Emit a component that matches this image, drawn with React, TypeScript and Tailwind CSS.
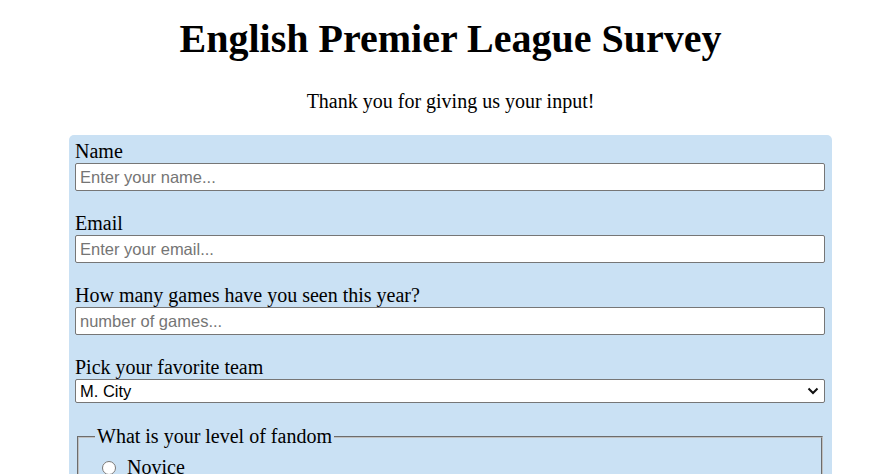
export default function App() {
  return (
    <div className="min-h-screen bg-white pl-6 text-black font-['Liberation_Serif','Times_New_Roman',serif]">
      {/* Heading */}
      <h1 className="pt-[16px] text-center text-[40px] font-bold leading-[46px]">
        English Premier League Survey
      </h1>
      <p className="mt-[28px] text-center text-[20px] leading-[23px]">
        Thank you for giving us your input!
      </p>

      {/* Survey form */}
      <form className="mx-auto mt-[22px] w-[763px] rounded-[5px] bg-[#cae1f4] pb-6 pl-[6px] pr-[7px] pt-[5px] text-[20px] leading-[23px]">
        <div className="mb-[21px]">
          <label htmlFor="name" className="block">Name</label>
          <input
            id="name"
            type="text"
            placeholder="Enter your name..."
            className="block h-[28px] w-full rounded-[2px] border border-[#767676] bg-white pl-[4px] font-['Liberation_Sans',Arial,sans-serif] text-[16.5px] placeholder:text-[#757575]"
          />
        </div>

        <div className="mb-[21px]">
          <label htmlFor="email" className="block">Email</label>
          <input
            id="email"
            type="email"
            placeholder="Enter your email..."
            className="block h-[28px] w-full rounded-[2px] border border-[#767676] bg-white pl-[4px] font-['Liberation_Sans',Arial,sans-serif] text-[16.5px] placeholder:text-[#757575]"
          />
        </div>

        <div className="mb-[21px]">
          <label htmlFor="games" className="block">How many games have you seen this year?</label>
          <input
            id="games"
            type="text"
            placeholder="number of games..."
            className="block h-[28px] w-full rounded-[2px] border border-[#767676] bg-white pl-[4px] font-['Liberation_Sans',Arial,sans-serif] text-[16.5px] placeholder:text-[#757575]"
          />
        </div>

        <div className="mb-[22px]">
          <label htmlFor="team" className="block">Pick your favorite team</label>
          <div className="relative">
            <select
              id="team"
              defaultValue="mcity"
              className="block h-[24px] w-full appearance-none rounded-[2px] border border-[#767676] bg-white pl-[4px] font-['Liberation_Sans',Arial,sans-serif] text-[16.5px] leading-[22px] text-black"
            >
              <option value="mcity">M. City</option>
              <option value="liverpool">Liverpool</option>
              <option value="arsenal">Arsenal</option>
              <option value="chelsea">Chelsea</option>
              <option value="munited">M. United</option>
            </select>
            <svg
              className="pointer-events-none absolute right-[6px] top-[8px]"
              width="12"
              height="8"
              viewBox="0 0 12 8"
              fill="none"
            >
              <path d="M1.5 1.5 6 6l4.5-4.5" stroke="#111" strokeWidth="2" />
            </svg>
          </div>
        </div>

        <fieldset className="mx-[2px] border-2 border-[#c0c0c0] px-[12px] pb-[10px] pt-[8px] [border-style:groove]">
          <legend className="ml-[4px] px-[2px]">What is your level of fandom</legend>
          <label className="flex items-center">
            <input type="radio" name="fandom" className="ml-[11px] mr-[11px] h-[14px] w-[14px]" />
            Novice
          </label>
          <label className="mt-[4px] flex items-center">
            <input type="radio" name="fandom" className="ml-[11px] mr-[11px] h-[14px] w-[14px]" />
            Casual Fan
          </label>
          <label className="mt-[4px] flex items-center">
            <input type="radio" name="fandom" className="ml-[11px] mr-[11px] h-[14px] w-[14px]" />
            Die Hard
          </label>
        </fieldset>
      </form>
    </div>
  );
}
